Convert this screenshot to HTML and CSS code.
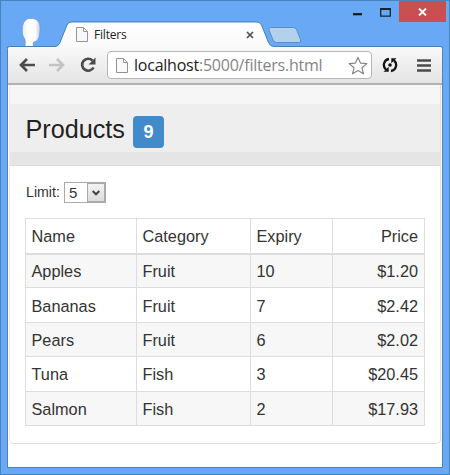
FILE: index.html
```html
<!DOCTYPE html>
<html lang="en">
<head>
<meta charset="utf-8">
<title>Filters</title>
<link rel="stylesheet" href="styles.css">
</head>
<body>
<div class="window">
  <header class="titlebar">
    <svg class="tab-art" width="450" height="48" viewBox="0 0 450 48">
      <defs>
        <linearGradient id="head" x2="1" y2="0"><stop offset="0" stop-color="#e2e9f0"/><stop offset=".3" stop-color="#fff"/><stop offset=".75" stop-color="#fafbfc"/><stop offset="1" stop-color="#bccbdc"/></linearGradient>
        <linearGradient id="tab" x2="0" y2="1"><stop offset="0" stop-color="#fff"/><stop offset="1" stop-color="#f9f9f9"/></linearGradient>
      </defs>
      <path d="M24.500 47c.9-2 1-5 .3-8-2-2-3-6-2.600-10C22.700 21.500 26 18.300 31 18.300c6 0 9.300 3.700 9.200 10-.1 7-1.500 13-5.700 13.500-1.500.2-1.700 2-.7 5.200z" fill="url(#head)" stroke="#719bc9" stroke-width=".8"/>
      <path d="M7 48q0-1.500 2.500-1.500H55q3.500 0 5-4L67 25q1.500-3 4-3h186q3 0 4.500 3l7 17.500q1.700 4 5 4H440q3 0 3 1.500z" fill="url(#tab)" stroke="#457fb9"/>
      <path d="M270.500 27.500h23q2 0 3 2l4 10q1 3-2 3h-22q-2.500 0-3.500-2.500l-4-10q-.8-2.500 1.500-2.500z" fill="#b3d0ec" stroke="#5a8fc4"/>
    </svg>
    <div class="tab">
      <svg width="12" height="15" viewBox="0 0 12 15"><path d="M.5.500h7l4 4v10H.5zM7.500.500v4h4" fill="#f8f8f8" stroke="#969696"/></svg>
      <span class="tab-title">Filters</span>
      <svg class="tab-close" width="8" height="8" viewBox="0 0 8 8"><path d="M1 1l6 6M7 1L1 7" stroke="#505050" stroke-width="1.700"/></svg>
    </div>
    <div class="controls">
      <svg class="minimize" width="9" height="3"><path d="M0 1.200h9" stroke="#15191f" stroke-width="2.200"/></svg>
      <svg class="maximize" width="11" height="9" viewBox="0 0 11 9"><path d="M.7 1.200h9.600v6.900H.7z" fill="none" stroke="#15232f" stroke-width="1.300"/><path d="M0 1h11" stroke="#15232f" stroke-width="2"/></svg>
      <div class="close"><svg width="9" height="8" viewBox="0 0 9 8"><path d="M1 .5l7 7M8 .5l-7 7" stroke="#fff" stroke-width="1.800"/></svg></div>
    </div>
  </header>
  <div class="browser">
    <nav class="toolbar">
      <svg class="back" width="16" height="14" viewBox="0 0 16 14"><path d="M8 1L2 7l6 6M2 7h14" fill="none" stroke="#4d4d4d" stroke-width="2.700"/></svg>
      <svg class="forward" width="16" height="14" viewBox="0 0 16 14"><path d="M8 1l6 6-6 6M14 7H0" fill="none" stroke="#c3c3c3" stroke-width="2.600"/></svg>
      <svg class="reload" width="16" height="16" viewBox="0 0 16 16"><path d="M12.500 3.600A6 6 0 1 0 13.500 10.500" fill="none" stroke="#4b4b4b" stroke-width="2.700"/><path d="M15.500.500v7h-7z" fill="#4b4b4b"/></svg>
      <div class="address">
        <svg class="page-icon" width="12" height="15" viewBox="0 0 12 15"><path d="M.5.500h7l4 4v10H.5zM7.500.500v4h4" fill="#fafafa" stroke="#929292"/></svg>
        <span class="url">localhost<span class="path">:5000/filters.html</span></span>
        <svg class="star" width="20" height="19" viewBox="0 0 20 19"><path d="M10 1.400l2.500 5.700 6.400.5-4.900 4.200 1.500 6L10 14.600l-5.500 3.200 1.500-6-4.900-4.200 6.400-.5z" fill="#fff" stroke="#858585" stroke-width="1.200" stroke-linejoin="round"/></svg>
      </div>
      <svg class="extension" width="16" height="16" viewBox="0 0 16 16"><path d="M7 2A6 6 0 0 0 4 12.500M9 14A6 6 0 0 0 12 3.500" fill="none" stroke="#141414" stroke-width="2.300"/><path d="M1.500 14.700h5.200V9.800zM14.500 1.300H9.300v4.900z" fill="#141414"/><circle cx="8" cy="8" r="1.800" fill="#141414"/></svg>
      <svg class="menu" width="14" height="13" viewBox="0 0 14 13"><path d="M0 1.500h14M0 6.500h14M0 11.500h14" stroke="#4b4b4b" stroke-width="2.700"/></svg>
    </nav>
    <main class="page">
      <section class="panel">
        <h1 class="heading">Products <span class="badge">9</span></h1>
        <div class="content">
          <div class="limit"><span>Limit:</span>
            <div class="select"><span class="value">5</span><span class="drop"><svg width="8" height="6" viewBox="0 0 8 6"><path d="M.7 1L4 4.300 7.300 1" fill="none" stroke="#444" stroke-width="2"/></svg></span></div>
          </div>
          <table class="products">
            <colgroup><col class="name"><col class="category"><col class="expiry"><col class="cost"></colgroup>
            <thead><tr><th>Name</th><th>Category</th><th>Expiry</th><th class="price">Price</th></tr></thead>
            <tbody>
              <tr><td>Apples</td><td>Fruit</td><td>10</td><td class="price">$1.20</td></tr>
              <tr><td>Bananas</td><td>Fruit</td><td>7</td><td class="price">$2.42</td></tr>
              <tr><td>Pears</td><td>Fruit</td><td>6</td><td class="price">$2.02</td></tr>
              <tr><td>Tuna</td><td>Fish</td><td>3</td><td class="price">$20.45</td></tr>
              <tr><td>Salmon</td><td>Fish</td><td>2</td><td class="price">$17.93</td></tr>
            </tbody>
          </table>
        </div>
      </section>
    </main>
  </div>
</div>
</body>
</html>
```
FILE: styles.css
```css
* { box-sizing: border-box; }
body { margin: 0; overflow: hidden; font-family: "Liberation Sans", Arial, sans-serif; color: #333; }
svg { display: block; flex: none; }
.window { width: 450px; height: 475px; background: #69a8f4; box-shadow: inset 0 0 0 1px #4783bd; display: flex; flex-direction: column; }
.titlebar { height: 47px; flex: none; display: flex; justify-content: space-between; position: relative; }
.tab-art { position: absolute; left: 0; top: 0; }
.tab { position: relative; width: 178px; height: 25px; margin: 22px 0 0 76px; display: flex; align-items: center; font: 12px "Open Sans", sans-serif; color: #222; }
.tab-title { margin-left: 6px; letter-spacing: -.2px; }
.tab-close { margin-left: auto; }
.controls { position: relative; display: flex; height: 22px; padding-right: 4px; }
.minimize { margin: 13px 18px 0 0; }
.maximize { margin: 8px 8px 0 0; }
.close { width: 47px; height: 21px; margin-top: 1px; background: #c94f50; display: flex; align-items: center; justify-content: center; }
.browser { position: relative; flex: 1; margin: 0 7px 7px; border: 1px solid #4a83bd; border-top: 0; border-radius: 3px 3px 0 0; background: #fff; overflow: hidden; display: flex; flex-direction: column; }
.toolbar { height: 38px; flex: none; display: flex; align-items: center; padding-left: 11px; background: linear-gradient(#f9f9f9, #e4e4e4); border-bottom: 2px solid #b2b2b2; }
.forward { margin-left: 14px; }
.reload { margin-left: 15px; }
.address { width: 265px; height: 28px; margin-left: 11px; padding: 0 3px 0 8px; display: flex; align-items: center; border: 1px solid #b5b5b5; border-radius: 4px; background: #fff; }
.url { margin-left: 6px; font: 16px/26px "Open Sans", sans-serif; letter-spacing: -.23px; color: #222; white-space: nowrap; }
.path { color: #858585; }
.star { margin-left: auto; }
.extension { margin-left: 10px; }
.menu { margin-left: 19px; }
.page { flex: 1; padding-right: 1px; }
.panel { height: 359px; border: 1px solid #ddd; border-top: 0; border-left-color: #f0eaf0; border-radius: 0 0 5px 5px; margin-left: 1px; }
.heading { height: 81px; margin: 0; padding: 9px 0 0 15.500px; display: flex; align-items: center; gap: 8px; font-size: 25.200px; font-weight: 400; color: #222; background: linear-gradient(#f6f6f6 0 19px, #eee 19px 67px, #e5e5e5 67px); border-bottom: 1px solid #ddd; }
.badge { width: 31px; height: 32px; margin-top: 4px; border-radius: 4px; background: #428bca; color: #fff; font-size: 18px; font-weight: 700; line-height: 32px; text-align: center; }
.content { padding: 16px 16px 0 15px; }
.limit { height: 21px; display: flex; align-items: center; gap: 4px; font-size: 14.200px; line-height: 15px; padding-left: 1px; }
.select { width: 42px; height: 21px; border: 1px solid #aaa; display: flex; font-size: 15px; line-height: 19px; background: #fff; }
.value { width: 22px; padding-left: 4px; }
.drop { width: 18px; border: 1px solid #aaa; background: linear-gradient(#f2f2f2, #ddd); display: flex; align-items: center; justify-content: center; }
.products { width: 400px; margin-top: 15px; border-collapse: collapse; table-layout: fixed; font-size: 16.300px; }
.name { width: 111px; }
.category { width: 114px; }
.expiry { width: 82px; }
.cost { width: 92px; }
th, td { height: 34.400px; padding: 1px 6px 0 5.500px; border: 1px solid #ddd; text-align: left; font-weight: 400; line-height: 20px; }
th { height: 35px; padding-top: 0; border-bottom-width: 2px; }
tbody tr:nth-child(odd) { background: #f7f7f7; }
.products .price { text-align: right; }
```
